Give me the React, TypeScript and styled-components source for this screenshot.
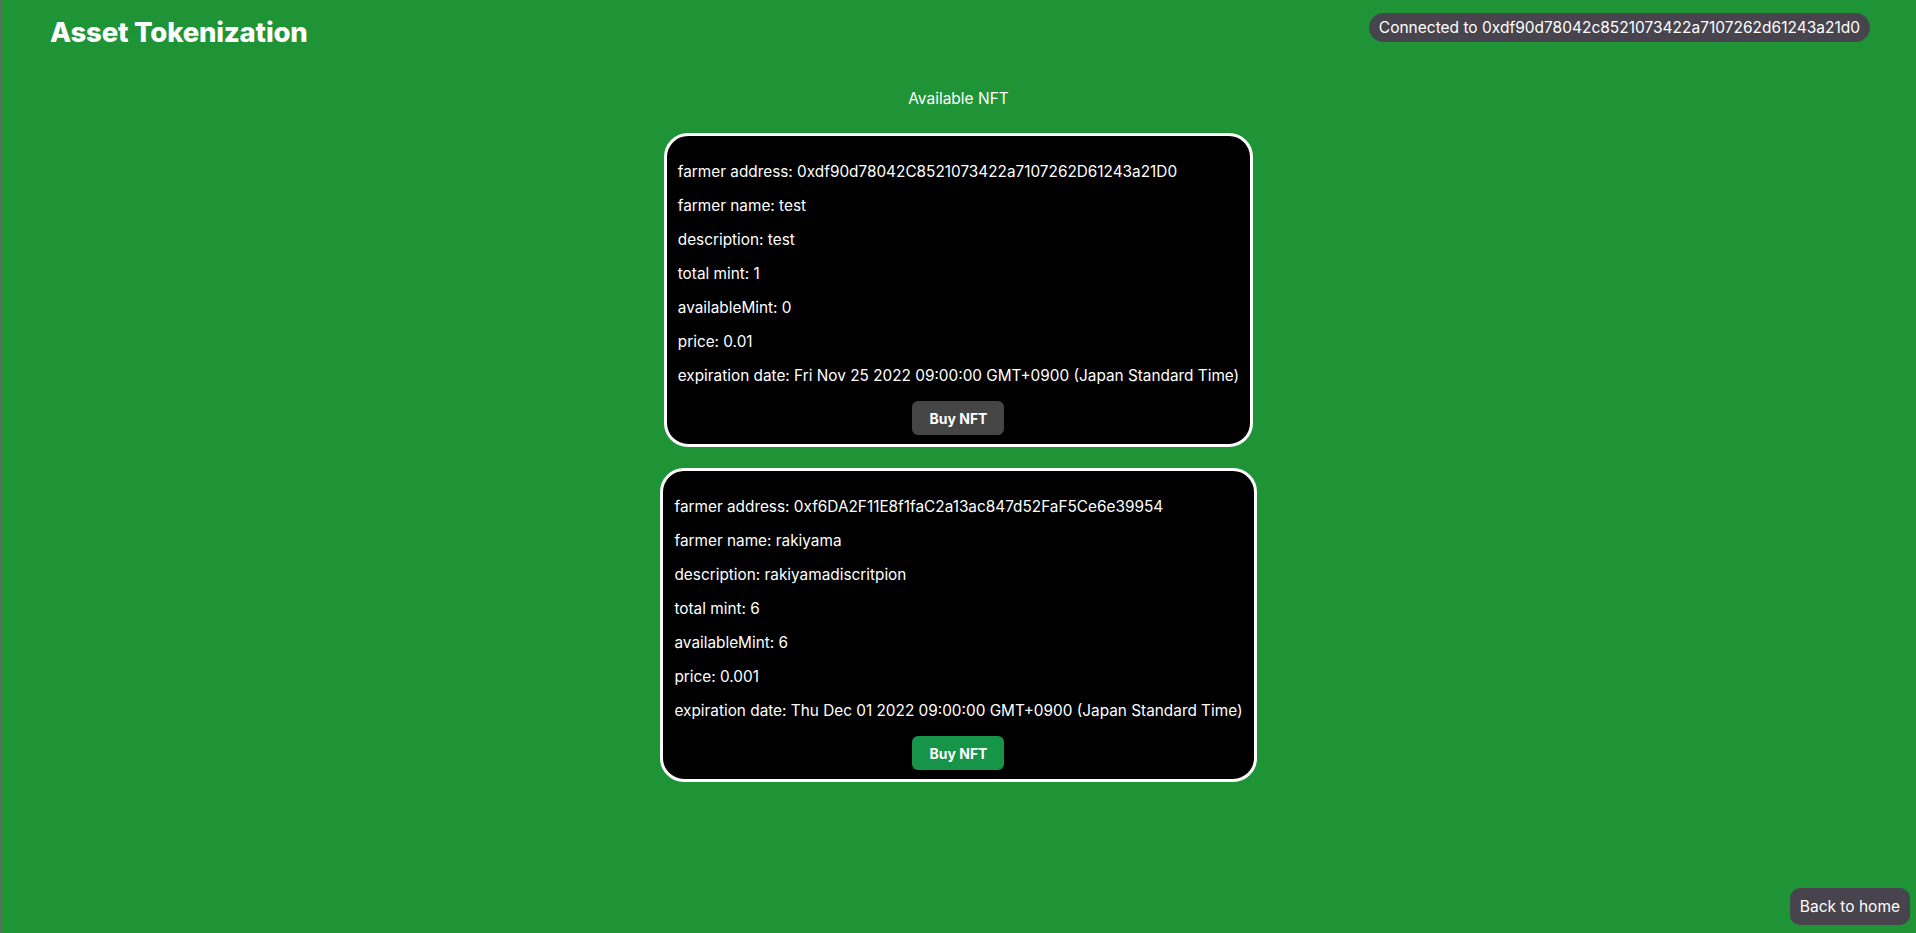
import React from "react";
import styled, { createGlobalStyle } from "styled-components";

const GlobalStyle = createGlobalStyle`
  html, body {
    margin: 0;
    padding: 0;
    background: #1e9436;
  }
  body {
    font-family: Inter, "Noto Sans", "Liberation Sans", sans-serif;
    color: #ffffff;
    border-left: 1px solid #5f6a62;
    box-sizing: border-box;
  }
  * { box-sizing: border-box; }
`;

const Page = styled.div`
  min-height: 100vh;
  background: #1e9436;
  display: flex;
  flex-direction: column;
`;

const Header = styled.header`
  display: flex;
  justify-content: space-between;
  align-items: flex-start;
  padding: 13px 46px 0 49px;
`;

const Title = styled.h1`
  margin: 2px 0 0;
  font-size: 27.5px;
  line-height: 34px;
  font-weight: 800;
  letter-spacing: -0.2px;
  color: #ffffff;
`;

const WalletPill = styled.div`
  height: 29px;
  line-height: 29px;
  padding: 0 10px;
  border-radius: 15px;
  background: #47444e;
  color: #ffffff;
  font-size: 15.5px;
  white-space: nowrap;
`;

const Main = styled.main`
  display: flex;
  flex-direction: column;
  align-items: center;
`;

const SectionTitle = styled.h2`
  margin: 40px 0 0;
  font-size: 15.5px;
  line-height: 19px;
  font-weight: 400;
  color: #ffffff;
`;

const CardList = styled.div`
  display: flex;
  flex-direction: column;
  align-items: center;
  gap: 21px;
  margin-top: 25px;
`;

const Card = styled.section`
  background: #000000;
  border: 3px solid #ffffff;
  border-radius: 24px;
  padding: 11px 11px 9px;
  color: #ffffff;
`;

const Field = styled.p`
  margin: 16px 0;
  font-size: 15.35px;
  line-height: 18px;
  white-space: nowrap;
`;

const BuyButton = styled.button<{ $enabled: boolean }>`
  display: block;
  margin: 1px auto 0;
  width: 92px;
  height: 34px;
  border: none;
  border-radius: 6px;
  background: ${(p) => (p.$enabled ? "#169447" : "#454545")};
  color: #ffffff;
  font-family: Inter, "Noto Sans", "Liberation Sans", sans-serif;
  font-size: 14px;
  font-weight: 700;
  cursor: ${(p) => (p.$enabled ? "pointer" : "default")};
`;

const BackHome = styled.button`
  position: fixed;
  right: 6px;
  bottom: 8px;
  height: 37px;
  padding: 0 10px;
  border: none;
  border-radius: 10px;
  background: #47444e;
  color: #ffffff;
  font-family: Inter, "Noto Sans", "Liberation Sans", sans-serif;
  font-size: 15.5px;
`;

type Nft = {
  address: string;
  name: string;
  description: string;
  totalMint: number;
  availableMint: number;
  price: string;
  expiration: string;
};

const nfts: Nft[] = [
  {
    address: "0xdf90d78042C8521073422a7107262D61243a21D0",
    name: "test",
    description: "test",
    totalMint: 1,
    availableMint: 0,
    price: "0.01",
    expiration: "Fri Nov 25 2022 09:00:00 GMT+0900 (Japan Standard Time)",
  },
  {
    address: "0xf6DA2F11E8f1faC2a13ac847d52FaF5Ce6e39954",
    name: "rakiyama",
    description: "rakiyamadiscritpion",
    totalMint: 6,
    availableMint: 6,
    price: "0.001",
    expiration: "Thu Dec 01 2022 09:00:00 GMT+0900 (Japan Standard Time)",
  },
];

export default function App() {
  return (
    <>
      <GlobalStyle />
      <Page>
        <Header>
          <Title>Asset Tokenization</Title>
          <WalletPill>Connected to 0xdf90d78042c8521073422a7107262d61243a21d0</WalletPill>
        </Header>
        <Main>
          <SectionTitle>Available NFT</SectionTitle>
          <CardList>
            {nfts.map((n) => (
              <Card key={n.address}>
                <Field>farmer address: {n.address}</Field>
                <Field>farmer name: {n.name}</Field>
                <Field>description: {n.description}</Field>
                <Field>total mint: {n.totalMint}</Field>
                <Field>availableMint: {n.availableMint}</Field>
                <Field>price: {n.price}</Field>
                <Field>expiration date: {n.expiration}</Field>
                <BuyButton $enabled={n.availableMint > 0}>Buy NFT</BuyButton>
              </Card>
            ))}
          </CardList>
        </Main>
        <BackHome>Back to home</BackHome>
      </Page>
    </>
  );
}
